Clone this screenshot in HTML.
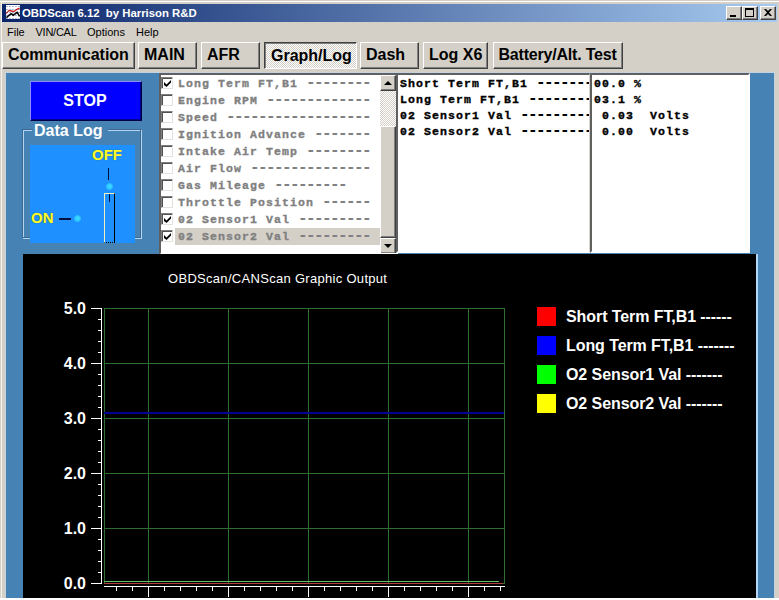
<!DOCTYPE html>
<html><head><meta charset="utf-8"><title>OBDScan 6.12 by Harrison R&amp;D</title>
<style>
*{box-sizing:border-box;margin:0;padding:0}
html,body{width:779px;height:600px;overflow:hidden;background:#d4d0c8;font-family:"Liberation Sans",sans-serif}
.a{position:absolute}
#win{position:absolute;left:0;top:0;width:779px;height:600px;background:#d4d0c8;overflow:hidden}
#tb{left:2px;top:4px;width:775px;height:18px;background:linear-gradient(to right,#0a246a 0%,#a6caf0 100%)}
#ttl{left:22px;top:5px;color:#fff;font-weight:bold;font-size:11.35px;line-height:16px;white-space:pre}
.cb{top:6px;width:16px;height:14px;background:#d4d0c8;border:1px solid;border-color:#fff #404040 #404040 #fff;box-shadow:inset -1px -1px 0 #808080}
.menu{top:24px;font-size:11px;line-height:16px;color:#000}
.tbtn{top:42px;height:27px;background:#d4d0c8;border:1px solid;border-color:#fff #404040 #404040 #fff;box-shadow:inset -1px -1px 0 #808080,inset 1px 1px 0 #d4d0c8;font-weight:bold;font-size:16px;line-height:23px;text-align:left;padding-left:5px;color:#000;white-space:nowrap;overflow:hidden}
.tbtn.on{border-color:#404040 #fff #fff #404040;box-shadow:inset 1px 1px 0 #808080;background:repeating-conic-gradient(#fff 0 25%,#d4d0c8 0 50%) 0 0/2px 2px;line-height:25px;padding-left:6px}
#client{left:5px;top:72px;width:770px;height:529px;background:#4682b4;border:1px solid #c4d2e0}
.mono{font-family:"Liberation Mono",monospace;font-weight:bold;font-size:11.5px;letter-spacing:1.1px;white-space:pre}

.btnstop{left:30px;top:81px;width:112px;padding-right:2px;font-weight:bold;height:40px;background:#0000ff;border:1px solid;border-color:#8c8cff #000048 #000048 #8c8cff;box-shadow:inset -1px -1px 0 #000090;color:#fff;font-size:16px;line-height:38px;text-align:center}
#grp{left:22px;top:129px;width:119px;height:109px;border:1px solid #3a6a94;box-shadow:inset 1px 1px 0 #b4d4f0,1px 1px 0 #b4d4f0}
#grplbl{left:32px;top:121px;padding:0 6px 0 2px;background:#4682b4;color:#fff;font-size:16px;font-weight:bold;line-height:20px}
#sw{left:30px;top:145px;width:105px;height:98px;background:#1e90ff;overflow:hidden}
.dot{width:7px;height:7px;border-radius:50%;background:radial-gradient(circle,#40e0ff 0,#30c8ff 50%,#1e90ff 100%)}
.swt{color:#ffff30;font-size:15px;font-weight:bold;line-height:16px;text-shadow:0 0 1px #405000}
#list{left:159px;top:73px;width:239px;height:182px;background:#fff;border:2px solid;border-color:#606060 #fff #fff #606060;overflow:hidden}
.row{left:0;width:220px;height:17px}
.row .ck{position:absolute;left:0;top:2px;width:12px;height:12px;border:1px solid;border-color:#808080 #e4e2dc #e4e2dc #808080;box-shadow:inset 1px 1px 0 #505050;background:#fff}
.row .ck svg{position:absolute;left:2px;top:2px}
.row .lbl{position:absolute;left:14px;top:0;right:0;height:17px;line-height:18px;color:#808080;padding-left:3px;-webkit-text-stroke:0.35px #808080}
.row.sel .lbl{background:#d4d0c8}
#sb{left:219px;top:0;width:16px;height:180px;background:repeating-conic-gradient(#fff 0 25%,#d4d0c8 0 50%) 0 0/2px 2px}
.sbb{left:0;width:16px;height:16px;background:#d4d0c8;border:1px solid;border-color:#fff #404040 #404040 #fff;box-shadow:inset -1px -1px 0 #808080}
.sbt{left:0;width:16px;background:#d4d0c8;border:1px solid;border-color:#fff #404040 #404040 #fff;box-shadow:inset -1px -1px 0 #808080}
.up,.dn{position:absolute;left:3px;top:5px;width:0;height:0;border-left:4px solid transparent;border-right:4px solid transparent}
.up{border-bottom:4px solid #000}
.dn{border-top:4px solid #000;top:5px}
.tx{top:73px;height:180px;background:#fff;border:2px solid;border-color:#606060 #fff #fff #606060;overflow:hidden;line-height:16px;color:#000;padding:1px 0 0 2px;-webkit-text-stroke:0.35px #000}
#tx1{left:396px;width:194px;border-right:1px solid #d8d4cc}
#tx2{left:590px;width:160px;padding-left:2px}
#chart{left:23px;top:254px;width:735px;height:346px;background:#000;border-right:2px solid #b4d6f8;overflow:hidden}

.lg{color:#fff;font-size:16px;font-weight:bold;letter-spacing:-0.08px;line-height:19px;white-space:pre}
.yl{color:#fff;font-size:16px;font-weight:bold;line-height:19px;width:26px;text-align:right}
#ctitle{color:#fff;font-size:13px;letter-spacing:0.3px;line-height:16px;white-space:pre;margin-top:1px}
.d{font-size:16px;letter-spacing:-1.6px;-webkit-text-stroke:0;line-height:0}
</style></head><body>
<div id="win">
<div class="a" style="left:0;top:1px;width:779px;height:1px;background:#fff"></div>
<div class="a" style="left:1px;top:1px;width:1px;height:599px;background:#f4f2ee"></div>
<div id="tb" class="a"></div>
<div id="ttl" class="a">OBDScan 6.12  by Harrison R&amp;D</div>
<div class="a cb" style="left:726px"><i style="position:absolute;left:3px;top:8px;width:6px;height:2px;background:#000"></i></div>
<div class="a cb" style="left:742px"><i style="position:absolute;left:2px;top:1px;width:9px;height:9px;border:1px solid #000;border-top-width:2px"></i></div>
<div class="a cb" style="left:760px"><svg style="position:absolute;left:3px;top:2px" width="8" height="7" viewBox="0 0 8 7"><path d="M0 0h2l2 2 2-2h2L5 3.5 8 7H6L4 5 2 7H0l3-3.500z" fill="#000"/></svg></div>
<svg class="a" style="left:6px;top:5px" width="14" height="14" viewBox="0 0 14 14" shape-rendering="crispEdges">
<rect width="14" height="14" fill="#fbfbfd"/>
<g fill="#b4b8d4"><rect x="0" y="1" width="14" height="1"/><rect x="0" y="4" width="14" height="1"/><rect x="0" y="7" width="14" height="1"/><rect x="0" y="10" width="14" height="1"/><rect x="0" y="13" width="14" height="1"/></g>
<g fill="#fbfbfd"><rect x="2" y="0" width="1" height="14"/><rect x="5" y="0" width="1" height="14"/><rect x="8" y="0" width="1" height="14"/><rect x="11" y="0" width="1" height="14"/></g>
<path d="M0 8.6 3.2 5.4 5.5 6 8 6.6 10.5 4.6 13.6 3.2" stroke="#c82020" stroke-width="1.3" fill="none" shape-rendering="auto"/>
<path d="M0.4 12.6 3.2 10.2 5.2 8.6 7.2 10.2 11.2 7.4 13.6 11.4" stroke="#000" stroke-width="1.5" fill="none" shape-rendering="auto"/>
</svg>
<div class="a menu" style="left:7px">File</div>
<div class="a menu" style="left:35.5px;letter-spacing:-0.25px">VIN/CAL</div>
<div class="a menu" style="left:87px">Options</div>
<div class="a menu" style="left:136px">Help</div>
<div class="a tbtn" style="left:2px;width:133px">Communication</div>
<div class="a tbtn" style="left:138px;width:59px">MAIN</div>
<div class="a tbtn" style="left:201px;width:59px">AFR</div>
<div class="a tbtn on" style="left:264px;width:93px">Graph/Log</div>
<div class="a tbtn" style="left:360px;width:59px">Dash</div>
<div class="a tbtn" style="left:423px;width:65px">Log X6</div>
<div class="a tbtn" style="left:493px;width:130px;letter-spacing:-0.2px;padding-left:4.5px">Battery/Alt. Test</div>
<div id="client" class="a"></div>
<div class="a btnstop">STOP</div>
<div class="a" id="grp"></div>
<div class="a" id="grplbl">Data Log</div>
<div class="a" id="sw">
 <div class="a swt" style="left:62px;top:2px">OFF</div>
 <div class="a swt" style="left:1px;top:65px">ON</div>
 <div class="a" style="left:77.5px;top:23px;width:1.5px;height:12px;background:#001040"></div>
 <div class="a dot" style="left:75.5px;top:38px"></div>
 <div class="a" style="left:29px;top:73px;width:12px;height:1.5px;background:#001040"></div>
 <div class="a dot" style="left:44px;top:70px"></div>
 <div class="a" style="left:74px;top:48px;width:11px;height:50px;border:1px solid #f0f0c0;border-right-color:#000;border-bottom:1px dotted #000"></div>
 <div class="a" style="left:78.5px;top:49px;width:1.5px;height:8px;background:#001040"></div>
</div>
<div class="a" id="list">
<div class="a row" style="top:0px"><span class="ck"><svg width=7 height=7 viewBox="0 0 7 7"><path d="M0 2v3l2.5 2L7 2.5V0L2.5 4.5z" fill="#000"/></svg></span><span class="lbl mono">Long Term FT,B1 <span class="d">--------</span></span></div>
<div class="a row" style="top:17px"><span class="ck"></span><span class="lbl mono">Engine RPM <span class="d">-------------</span></span></div>
<div class="a row" style="top:34px"><span class="ck"></span><span class="lbl mono">Speed <span class="d">------------------</span></span></div>
<div class="a row" style="top:51px"><span class="ck"></span><span class="lbl mono">Ignition Advance <span class="d">-------</span></span></div>
<div class="a row" style="top:68px"><span class="ck"></span><span class="lbl mono">Intake Air Temp <span class="d">--------</span></span></div>
<div class="a row" style="top:85px"><span class="ck"></span><span class="lbl mono">Air Flow <span class="d">---------------</span></span></div>
<div class="a row" style="top:102px"><span class="ck"></span><span class="lbl mono">Gas Mileage <span class="d">---------</span></span></div>
<div class="a row" style="top:119px"><span class="ck"></span><span class="lbl mono">Throttle Position <span class="d">------</span></span></div>
<div class="a row" style="top:136px"><span class="ck"><svg width=7 height=7 viewBox="0 0 7 7"><path d="M0 2v3l2.5 2L7 2.5V0L2.5 4.5z" fill="#000"/></svg></span><span class="lbl mono">02 Sensor1 Val <span class="d">---------</span></span></div>
<div class="a row sel" style="top:153px"><span class="ck"><svg width=7 height=7 viewBox="0 0 7 7"><path d="M0 2v3l2.5 2L7 2.5V0L2.5 4.5z" fill="#000"/></svg></span><span class="lbl mono">02 Sensor2 Val <span class="d">---------</span></span></div>

 <div class="a" id="sb">
  <div class="a sbb" style="top:0"><i class="up"></i></div>
  <div class="a sbt" style="top:51px;height:112px"></div>
  <div class="a sbb" style="top:163px"><i class="dn"></i></div>
 </div>
</div>
<div class="a tx mono" id="tx1">Short Term FT,B1 <span class="d">---------</span>
Long Term FT,B1 <span class="d">----------</span>
02 Sensor1 Val <span class="d">-----------</span>
02 Sensor2 Val <span class="d">-----------</span></div>
<div class="a tx mono" id="tx2">00.0 %
03.1 %
 0.03  Volts
 0.00  Volts</div>
<div class="a" id="chart">
<svg class="a" style="left:0;top:0" width="734" height="346" viewBox="0 0 734 346" shape-rendering="crispEdges">
<rect x="81" y="54" width="401" height="1" fill="#2e6e2e"/>
<rect x="81" y="109" width="401" height="1" fill="#2e6e2e"/>
<rect x="81" y="164" width="401" height="1" fill="#2e6e2e"/>
<rect x="81" y="219" width="401" height="1" fill="#2e6e2e"/>
<rect x="81" y="274" width="401" height="1" fill="#2e6e2e"/>
<rect x="81" y="329" width="401" height="1" fill="#2e6e2e"/>
<rect x="81" y="54" width="1" height="276" fill="#2e6e2e"/>
<rect x="125" y="54" width="1" height="276" fill="#2e6e2e"/>
<rect x="205" y="54" width="1" height="276" fill="#2e6e2e"/>
<rect x="285" y="54" width="1" height="276" fill="#2e6e2e"/>
<rect x="365" y="54" width="1" height="276" fill="#2e6e2e"/>
<rect x="445" y="54" width="1" height="276" fill="#2e6e2e"/>
<rect x="481" y="54" width="1" height="276" fill="#2e6e2e"/>
<rect x="78" y="54" width="1" height="276" fill="#fff"/>
<rect x="68" y="54" width="10" height="1" fill="#fff"/>
<rect x="75" y="65" width="3" height="1" fill="#fff"/>
<rect x="75" y="76" width="3" height="1" fill="#fff"/>
<rect x="75" y="87" width="3" height="1" fill="#fff"/>
<rect x="75" y="98" width="3" height="1" fill="#fff"/>
<rect x="68" y="109" width="10" height="1" fill="#fff"/>
<rect x="75" y="120" width="3" height="1" fill="#fff"/>
<rect x="75" y="131" width="3" height="1" fill="#fff"/>
<rect x="75" y="142" width="3" height="1" fill="#fff"/>
<rect x="75" y="153" width="3" height="1" fill="#fff"/>
<rect x="68" y="164" width="10" height="1" fill="#fff"/>
<rect x="75" y="175" width="3" height="1" fill="#fff"/>
<rect x="75" y="186" width="3" height="1" fill="#fff"/>
<rect x="75" y="197" width="3" height="1" fill="#fff"/>
<rect x="75" y="208" width="3" height="1" fill="#fff"/>
<rect x="68" y="219" width="10" height="1" fill="#fff"/>
<rect x="75" y="230" width="3" height="1" fill="#fff"/>
<rect x="75" y="241" width="3" height="1" fill="#fff"/>
<rect x="75" y="252" width="3" height="1" fill="#fff"/>
<rect x="75" y="263" width="3" height="1" fill="#fff"/>
<rect x="68" y="274" width="10" height="1" fill="#fff"/>
<rect x="75" y="285" width="3" height="1" fill="#fff"/>
<rect x="75" y="296" width="3" height="1" fill="#fff"/>
<rect x="75" y="307" width="3" height="1" fill="#fff"/>
<rect x="75" y="318" width="3" height="1" fill="#fff"/>
<rect x="68" y="329" width="10" height="1" fill="#fff"/>
<rect x="81" y="332" width="401" height="1" fill="#fff"/>
<rect x="93" y="332" width="1" height="5" fill="#fff"/>
<rect x="109" y="332" width="1" height="5" fill="#fff"/>
<rect x="125" y="332" width="1" height="11" fill="#fff"/>
<rect x="141" y="332" width="1" height="5" fill="#fff"/>
<rect x="157" y="332" width="1" height="5" fill="#fff"/>
<rect x="173" y="332" width="1" height="5" fill="#fff"/>
<rect x="189" y="332" width="1" height="5" fill="#fff"/>
<rect x="205" y="332" width="1" height="11" fill="#fff"/>
<rect x="221" y="332" width="1" height="5" fill="#fff"/>
<rect x="237" y="332" width="1" height="5" fill="#fff"/>
<rect x="253" y="332" width="1" height="5" fill="#fff"/>
<rect x="269" y="332" width="1" height="5" fill="#fff"/>
<rect x="285" y="332" width="1" height="11" fill="#fff"/>
<rect x="301" y="332" width="1" height="5" fill="#fff"/>
<rect x="317" y="332" width="1" height="5" fill="#fff"/>
<rect x="333" y="332" width="1" height="5" fill="#fff"/>
<rect x="349" y="332" width="1" height="5" fill="#fff"/>
<rect x="365" y="332" width="1" height="11" fill="#fff"/>
<rect x="381" y="332" width="1" height="5" fill="#fff"/>
<rect x="397" y="332" width="1" height="5" fill="#fff"/>
<rect x="413" y="332" width="1" height="5" fill="#fff"/>
<rect x="429" y="332" width="1" height="5" fill="#fff"/>
<rect x="445" y="332" width="1" height="11" fill="#fff"/>
<rect x="461" y="332" width="1" height="5" fill="#fff"/>
<rect x="477" y="332" width="1" height="5" fill="#fff"/>
<rect x="81" y="158" width="400" height="2" fill="#000094"/>
<rect x="81" y="327" width="395" height="1" fill="#60c060"/>
<rect x="81" y="329" width="399" height="1" fill="#b04040"/>
<rect x="514" y="53" width="19" height="19" fill="#ff0000"/>
<rect x="514" y="82" width="19" height="19" fill="#0000ff"/>
<rect x="514" y="111" width="19" height="19" fill="#00ff00"/>
<rect x="514" y="140" width="19" height="19" fill="#ffff00"/>
</svg>
<div class="a lg" style="left:543px;top:53px">Short Term FT,B1 ------</div>
<div class="a lg" style="left:543px;top:82px">Long Term FT,B1 -------</div>
<div class="a lg" style="left:543px;top:111px">O2 Sensor1 Val -------</div>
<div class="a lg" style="left:543px;top:140px">O2 Sensor2 Val -------</div>
<div class="a yl" style="left:37px;top:45px">5.0</div>
<div class="a yl" style="left:37px;top:100px">4.0</div>
<div class="a yl" style="left:37px;top:155px">3.0</div>
<div class="a yl" style="left:37px;top:210px">2.0</div>
<div class="a yl" style="left:37px;top:265px">1.0</div>
<div class="a yl" style="left:37px;top:320px">0.0</div>
<div class="a" id="ctitle" style="left:145px;top:16px">OBDScan/CANScan Graphic Output</div>
</div>

<div class="a" style="left:0;top:598px;width:779px;height:2px;background:#fff"></div>
</div>
</body></html>
